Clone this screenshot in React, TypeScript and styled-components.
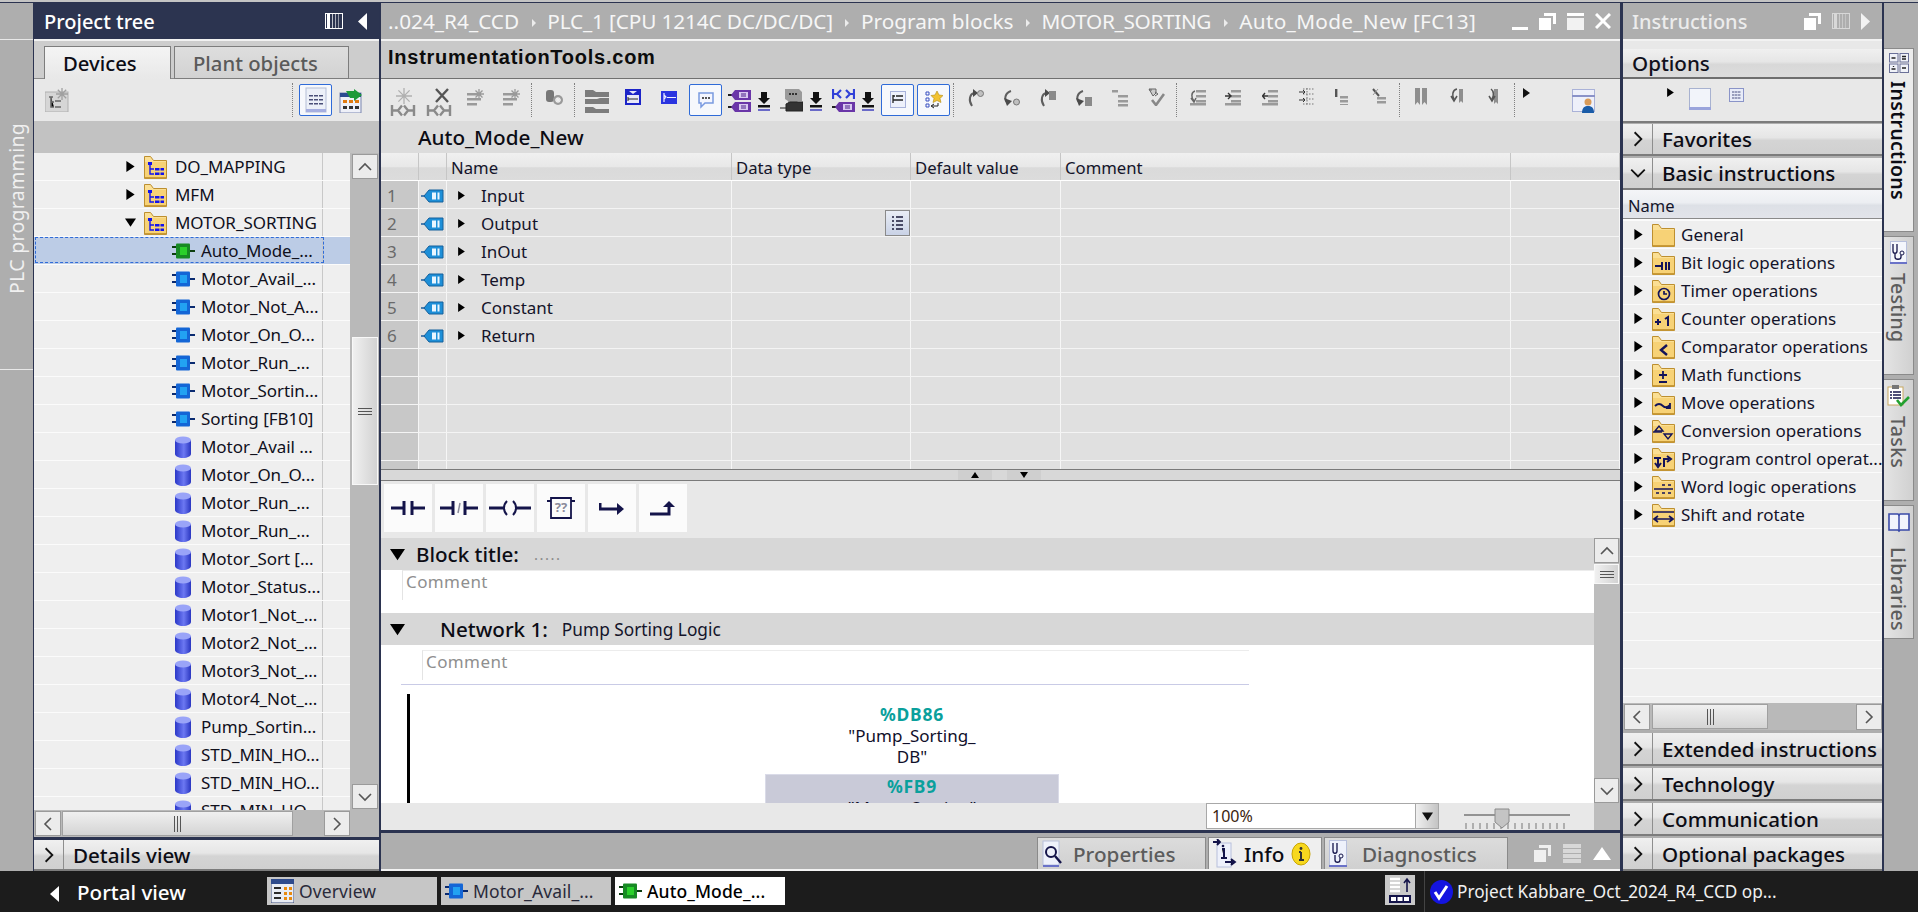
import React from "react";
import styled, { createGlobalStyle } from "styled-components";

const GlobalStyle = createGlobalStyle`
  html, body { margin: 0; padding: 0; background: #1c1c1c; overflow: hidden; }
  * { box-sizing: border-box; }
  #root { font-family: "Noto Sans", "Open Sans", sans-serif; color: #10101c; }
`;

const Screen = styled.div`
  width: 1918px;
  height: 912px;
  display: flex;
  flex-direction: column;
  overflow: hidden;
`;
const TopEdge = styled.div`
  height: 3px;
  flex: none;
  background: #c4c4c4;
  border-bottom: 1px solid #2b3350;
`;
const Workspace = styled.div`
  flex: 1;
  display: flex;
  min-height: 0;
  background: #2b3350;
`;
const SideRail = styled.div`
  width: 33px;
  flex: none;
  background: #aeaeae;
  display: flex;
  flex-direction: column;
`;
const RailHead = styled.div`
  height: 37px;
  flex: none;
  border-bottom: 1px solid #e8e8e8;
`;
const RailLabel = styled.div`
  height: 330px;
  flex: none;
  border-top: 1px solid #e8e8e8;
  writing-mode: vertical-rl;
  transform: rotate(180deg);
  color: #f0f0f0;
  font-size: 19.5px;
  letter-spacing: 0.3px;
  display: flex;
  align-items: center;
  justify-content: flex-start;
  padding-top: 75px;
`;
const Line = styled.div<{ $w?: number }>`
  flex: none;
  width: ${(p) => p.$w ?? 2}px;
`;

const TreePanel = styled.div`
  width: 345px;
  margin-left: 1px;
  flex: none;
  display: flex;
  flex-direction: column;
  background: #aeaeae;
`;
const PanelHead = styled.div<{ $dark?: boolean }>`
  height: 38px;
  flex: none;
  display: flex;
  align-items: center;
  background: ${(p) => (p.$dark ? "#2c3450" : "#aeaeae")};
  border-bottom: 2px solid #f2f2f2;
  color: ${(p) => (p.$dark ? "#ffffff" : "#ececec")};
  font-size: 20px;
  white-space: nowrap;
`;
const HeadTitle = styled.span<{ $left: number }>`
  margin-left: ${(p) => p.$left}px;
  flex: 1;
  font-weight: 500;
`;
const HeadIcons = styled.span<{ $gap: number; $right: number }>`
  display: flex;
  align-items: center;
  gap: ${(p) => p.$gap}px;
  margin-right: ${(p) => p.$right}px;
`;
const TabStrip = styled.div`
  height: 38px;
  flex: none;
  background: #cdcdcd;
  display: flex;
  align-items: flex-end;
  gap: 3px;
  padding-left: 10px;
  border-bottom: 1px solid #8a8a8a;
`;
const TreeTab = styled.div<{ $active?: boolean; $w: number; $pl: number }>`
  width: ${(p) => p.$w}px;
  height: 33px;
  margin-bottom: -1px;
  padding-left: ${(p) => p.$pl}px;
  display: flex;
  align-items: center;
  font-size: 20.3px;
  font-weight: 500;
  color: ${(p) => (p.$active ? "#0c0c14" : "#5a5a5a")};
  border: 1px solid #7d7d7d;
  border-bottom: ${(p) => (p.$active ? "none" : "1px solid #7d7d7d")};
  background: ${(p) =>
    p.$active ? "linear-gradient(#f4f4f4, #e8e8e8)" : "linear-gradient(#dedede, #d2d2d2)"};
`;
const TreeTools = styled.div`
  height: 42px;
  flex: none;
  background: #e8e8e8;
  display: flex;
  align-items: center;
  padding-left: 11px;
`;
const ToolSep = styled.span<{ $ml: number }>`
  display: block;
  flex: none;
  margin-left: ${(p) => p.$ml}px;
  width: 1px;
  height: 34px;
  border-left: 1px dotted #808080;
`;
const SelectedTool = styled.span<{ $w?: number; $ml?: number; $top?: number }>`
  flex: none;
  display: flex;
  align-items: center;
  justify-content: center;
  width: ${(p) => p.$w ?? 33}px;
  height: 32px;
  margin-left: ${(p) => p.$ml ?? 0}px;
  margin-top: ${(p) => p.$top ?? 0}px;
  border: 1px solid #2f6bd8;
  border-radius: 2px;
  background: #f6f8fc;
`;
const TreeToolIcon = styled.span`
  margin-left: 7px;
  line-height: 0;
`;
const GreyBand = styled.div`
  height: 32px;
  flex: none;
  background: #c2c2c2;
`;
const TreeBody = styled.div`
  flex: 1;
  display: flex;
  min-height: 0;
`;
const TreeList = styled.div`
  width: 316px;
  flex: none;
  background: #efefef;
  overflow: hidden;
`;
const TreeRow = styled.div<{ $selected?: boolean }>`
  position: relative;
  height: 28px;
  display: flex;
  align-items: center;
  border-bottom: 1px solid #fbfbfb;
  background: ${(p) => (p.$selected ? "#bccce6" : "transparent")};
  font-size: 17px;
  letter-spacing: -0.05px;
  white-space: nowrap;
  &::before {
    content: "";
    position: absolute;
    left: 288px;
    top: 0;
    bottom: 0;
    width: 1px;
    background: #c8c8c8;
  }
  &::after {
    content: "";
    position: absolute;
    left: 1px;
    top: 0;
    bottom: 1px;
    width: 287px;
    border: ${(p) => (p.$selected ? "1px dashed #2f6bd8" : "none")};
  }
`;
const TreeArrowSlot = styled.span`
  width: 102px;
  flex: none;
  display: flex;
  justify-content: flex-end;
`;
const TreeFolderSlot = styled.span`
  flex: none;
  display: flex;
  width: 39px;
  justify-content: flex-end;
  padding-right: 8px;
`;
const TreeBlockSlot = styled.span<{ $pl?: number }>`
  margin-left: 138px;
  width: 29px;
  padding-left: ${(p) => p.$pl ?? 0}px;
  flex: none;
  display: flex;
  justify-content: flex-start;
`;
const VScroll = styled.div`
  width: 29px;
  flex: none;
  background: #b9b9b9;
  display: flex;
  flex-direction: column;
  align-items: center;
  padding: 1px 0;
`;
const ScrollBtn = styled.div<{ $w: number; $h: number; $ml?: number }>`
  width: ${(p) => p.$w}px;
  height: ${(p) => p.$h}px;
  margin-left: ${(p) => p.$ml ?? 0}px;
  flex: none;
  display: flex;
  align-items: center;
  justify-content: center;
  background: #ececec;
  border: 1px solid #fafafa;
  outline: 1px solid #9a9a9a;
  outline-offset: -1px;
`;
const VThumb = styled.div<{ $top: number; $h: number; $w?: number }>`
  width: ${(p) => p.$w ?? 26}px;
  height: ${(p) => p.$h}px;
  margin-top: ${(p) => p.$top}px;
  flex: none;
  background: linear-gradient(90deg, #f0f0f0, #d2d2d2);
  border: 1px solid #f8f8f8;
  display: flex;
  align-items: center;
  justify-content: center;
`;
const Spacer = styled.div`
  flex: 1;
`;
const GripH = styled.div`
  width: 14px;
  height: 7px;
  border-top: 1px solid #555;
  border-bottom: 1px solid #555;
  position: relative;
  &::after {
    content: "";
    position: absolute;
    left: 0;
    right: 0;
    top: 2px;
    height: 1px;
    background: #555;
  }
`;
const GripV = styled.div`
  width: 7px;
  height: 16px;
  border-left: 1px solid #555;
  border-right: 1px solid #555;
  position: relative;
  &::after {
    content: "";
    position: absolute;
    top: 0;
    bottom: 0;
    left: 2px;
    width: 1px;
    background: #555;
  }
`;
const HScroll = styled.div`
  height: 27px;
  flex: none;
  display: flex;
  align-items: center;
  background: #b9b9b9;
  padding-left: 1px;
`;
const HThumb = styled.div<{ $ml: number; $w: number }>`
  width: ${(p) => p.$w}px;
  margin-left: ${(p) => p.$ml}px;
  height: 25px;
  flex: none;
  display: flex;
  align-items: center;
  justify-content: center;
  background: linear-gradient(#f0f0f0, #d4d4d4);
  border: 1px solid #f8f8f8;
  outline: 1px solid #a0a0a0;
  outline-offset: -1px;
`;
const DarkRule = styled.div`
  height: 3px;
  flex: none;
  background: #2b3350;
`;
const Accordion = styled.div<{ $h: number; $mt?: number }>`
  height: ${(p) => p.$h}px;
  margin-top: ${(p) => p.$mt ?? 0}px;
  flex: none;
  display: flex;
  align-items: center;
  background: linear-gradient(#f0f0f0 0%, #e6e6e6 45%, #d4d4d4 55%, #d0d0d0 100%);
  border-bottom: 2px solid #7c7c7c;
  font-size: 20.6px;
  font-weight: 500;
  color: #0c0c14;
  white-space: nowrap;
`;
const AccordionChevron = styled.span`
  width: 30px;
  align-self: stretch;
  flex: none;
  display: flex;
  align-items: center;
  justify-content: center;
  border-right: 1px solid #8e8e8e;
  margin-right: 9px;
`;

const EditorPanel = styled.div`
  width: 1239px;
  flex: none;
  display: flex;
  flex-direction: column;
  background: #e8e8e8;
`;
const Crumbs = styled.div`
  flex: 1;
  display: flex;
  align-items: center;
  padding-left: 7px;
  gap: 11.5px;
  font-size: 20.8px;
  color: #f6f6f6;
`;
const Crumb = styled.span<{ $ls?: number }>`
  letter-spacing: ${(p) => p.$ls ?? 0}px;
`;
const CrumbArrow = styled.span`
  width: 0;
  height: 0;
  border-left: 4px solid #ececec;
  border-top: 4px solid transparent;
  border-bottom: 4px solid transparent;
  margin: 3px 0 0 1px;
`;
const BrandBar = styled.div`
  height: 38px;
  flex: none;
  background: #c9c9c9;
  border-bottom: 1px solid #707070;
  padding: 0 0 4px 7px;
  display: flex;
  align-items: center;
  font-family: "Liberation Sans", Arial, sans-serif;
  font-weight: 700;
  font-size: 20px;
  letter-spacing: 0.75px;
  color: #0c0c0c;
`;
const ToolBar = styled.div`
  height: 42px;
  flex: none;
  display: flex;
  align-items: flex-start;
  background: #e8e8e8;
`;
const Tool = styled.span<{ $ml: number; $top: number }>`
  display: block;
  flex: none;
  margin-left: ${(p) => p.$ml}px;
  margin-top: ${(p) => p.$top}px;
  line-height: 0;
`;
const BlockTitle = styled.div`
  height: 32px;
  flex: none;
  display: flex;
  align-items: center;
  padding-left: 37px;
  background: #dcdcdc;
  font-size: 20.7px;
  font-weight: 500;
  color: #0c0c14;
`;
const DeclTable = styled.div`
  height: 316px;
  flex: none;
  overflow: hidden;
  background: #e0e0e0;
`;
const DeclGrid = styled.div<{ $head?: boolean }>`
  display: grid;
  grid-template-columns: 38px 28px 285px 179px 150px 450px 1fr;
  height: 28px;
  background: ${(p) => (p.$head ? "linear-gradient(#f0f0f0 0%, #e8e8e8 50%, #dadada 55%, #dcdcdc 100%)" : "#e0e0e0")};
  border-bottom: 1px solid ${(p) => (p.$head ? "#ffffff" : "#f4f4f4")};
  font-size: ${(p) => (p.$head ? 16.7 : 17)}px;
  color: #14142a;
`;
const DeclCell = styled.div<{ $num?: boolean; $pad?: number }>`
  display: flex;
  align-items: center;
  border-right: 1px solid #f6f6f6;
  padding-left: ${(p) => p.$pad ?? 0}px;
  padding-top: 2px;
  background: ${(p) => (p.$num ? "#c8c8c8" : "transparent")};
  color: ${(p) => (p.$num ? "#6a6a6a" : "inherit")};
  position: relative;
`;
const HeadCell = styled(DeclCell)`
  border-right: 1px solid #c6c6c6;
  padding-left: ${(p) => p.$pad ?? 4}px;
`;
const NameText = styled.span`
  margin-left: 15px;
`;
const MiniList = styled.span`
  position: absolute;
  right: 0;
  top: 1px;
  width: 25px;
  height: 26px;
  border: 1px solid #8a8a8a;
  background: linear-gradient(#e9edf5, #c9d2e6);
  display: flex;
  align-items: center;
  justify-content: center;
`;
const Splitter = styled.div`
  height: 12px;
  flex: none;
  background: #d8d8d8;
  border-top: 1px solid #7a7a7a;
  border-bottom: 1px solid #7a7a7a;
  display: flex;
  gap: 15px;
  padding-left: 577px;
`;
const SplitBtn = styled.div`
  width: 34px;
  height: 10px;
  background: #cfcfcf;
  display: flex;
  align-items: center;
  justify-content: center;
`;
const Palette = styled.div`
  height: 57px;
  flex: none;
  display: flex;
  gap: 3px;
  padding: 3px 0 0 3px;
  background: #e8e8e8;
`;
const PaletteBtn = styled.div`
  width: 48px;
  height: 48px;
  background: #fbfbfb;
  display: flex;
  align-items: center;
  justify-content: center;
`;
const CanvasRow = styled.div`
  flex: 1;
  display: flex;
  min-height: 0;
`;
const Canvas = styled.div`
  width: 1213px;
  flex: none;
  background: #ffffff;
  overflow: hidden;
`;
const NetHead = styled.div<{ $pad: number }>`
  height: 32px;
  display: flex;
  align-items: center;
  background: #d7d7d7;
  padding-left: 9px;
  font-size: 20.6px;
  font-weight: 500;
  color: #0c0c14;
  & > b {
    font-weight: 500;
    margin-left: ${(p) => p.$pad}px;
  }
`;
const NetTitle = styled.span<{ $ml: number }>`
  margin-left: ${(p) => p.$ml}px;
  font-size: 17.3px;
  font-weight: 400;
  color: #14142a;
`;
const TitleDots = styled.span`
  margin-left: 15px;
  font-size: 15px;
  font-weight: 400;
  letter-spacing: 1.5px;
  color: #8a8a8a;
`;
const CommentBox = styled.div<{ $ml: number; $h: number; $w: number }>`
  margin-left: ${(p) => p.$ml}px;
  width: ${(p) => p.$w}px;
  height: ${(p) => p.$h}px;
  border-left: 1px solid #e4e4e4;
  border-top: 1px solid #ececec;
  padding: 0 0 0 3px;
  font-size: 17px;
  line-height: 22px;
  color: #8f8f8f;
  letter-spacing: 0.4px;
`;
const CommentWrap = styled.div<{ $pt: number; $h: number }>`
  height: ${(p) => p.$h}px;
  padding-top: ${(p) => p.$pt}px;
`;
const NetRule = styled.div`
  margin: 4px 0 0 20px;
  width: 848px;
  height: 1px;
  background: #c9cbe6;
`;
const Rung = styled.div`
  display: flex;
  padding: 9px 0 0 26px;
  height: 120px;
`;
const RungBar = styled.div`
  width: 3px;
  height: 111px;
  flex: none;
  background: #000;
`;
const FbColumn = styled.div`
  margin-left: 355px;
  width: 294px;
  flex: none;
  text-align: center;
  font-size: 17px;
  line-height: 21px;
  color: #10102a;
  padding-top: 9px;
`;
const Address = styled.div`
  color: #0aa09c;
  font-weight: 700;
  font-size: 17.5px;
  letter-spacing: 0.7px;
  line-height: 22px;
`;
const FbBox = styled.div`
  margin-top: 7px;
  height: 40px;
  background: #c9cad8;
  border: 1px solid #dadbe8;
`;
const CanvasScroll = styled.div`
  width: 26px;
  flex: none;
  background: #bdbdbd;
  display: flex;
  flex-direction: column;
`;
const StatusRow = styled.div`
  height: 27px;
  flex: none;
  display: flex;
  align-items: stretch;
  padding-left: 825px;
  background: #e8e8e8;
`;
const Combo = styled.div`
  width: 233px;
  height: 26px;
  flex: none;
  display: flex;
  background: #fff;
  border: 1px solid #a8a8a8;
  font-size: 16px;
  color: #3a2410;
`;
const ComboText = styled.span`
  flex: 1;
  padding-left: 5px;
  line-height: 24px;
`;
const ComboBtn = styled.span`
  width: 23px;
  display: flex;
  align-items: center;
  justify-content: center;
  background: linear-gradient(90deg, #f0f0f0, #c4c4c4);
  border-left: 1px solid #a8a8a8;
`;
const ZoomSlider = styled.span`
  margin-left: 25px;
  line-height: 0;
  flex: none;
`;
const StatusEnd = styled.div`
  margin-left: auto;
  width: 26px;
  background: #bdbdbd;
`;
const InspectorBar = styled.div`
  height: 38px;
  flex: none;
  display: flex;
  align-items: flex-end;
  background: #aeaeae;
  border-bottom: 2px solid #f2f2f2;
  padding: 0 0 0 656px;
`;
const InspectorTab = styled.div<{ $w: number; $active?: boolean; $ml: number; $gap: number }>`
  width: ${(p) => p.$w}px;
  margin-left: ${(p) => p.$ml}px;
  height: 32px;
  flex: none;
  display: flex;
  align-items: center;
  gap: ${(p) => p.$gap}px;
  padding-left: 4px;
  font-size: 20.7px;
  font-weight: 500;
  color: ${(p) => (p.$active ? "#0c0c14" : "#5c5c5c")};
  border: 1px solid #8a8a8a;
  border-bottom: none;
  background: ${(p) => (p.$active ? "#efefef" : "linear-gradient(#dcdcdc, #d0d0d0)")};
`;
const InspectorIcons = styled.div`
  margin-left: 26px;
  height: 32px;
  display: flex;
  align-items: center;
  gap: 12px;
`;

const InstrPanel = styled.div`
  width: 259px;
  flex: none;
  display: flex;
  flex-direction: column;
  background: #aeaeae;
`;
const OptionsGap = styled.div`
  background: #e8e8e8;
  display: flex;
  flex-direction: column;
  flex: none;
`;
const OptionsBar = styled.div`
  height: 30px;
  margin-top: 8px;
  flex: none;
  display: flex;
  align-items: center;
  padding-left: 9px;
  font-size: 20.6px;
  font-weight: 500;
  background: linear-gradient(#f0f0f0 0%, #e6e6e6 45%, #d8d8d8 55%, #dcdcdc 100%);
  border-bottom: 2px solid #6e6e6e;
`;
const OptionsTools = styled.div`
  height: 44px;
  flex: none;
  display: flex;
  align-items: flex-start;
  background: #e8e8e8;
  border-bottom: 2px solid #7c7c7c;
`;
const InstrHeader = styled.div`
  height: 29px;
  flex: none;
  display: flex;
  align-items: center;
  padding: 2px 0 0 5px;
  font-size: 16.5px;
  color: #14142a;
  background: linear-gradient(#f4f5f8 0%, #eceef2 45%, #dde0e6 55%, #e2e4ea 100%);
  border-bottom: 1px solid #8a8a8a;
`;
const InstrList = styled.div`
  height: 484px;
  flex: none;
  overflow: hidden;
  background: #efefef;
  border-top: 2px solid #fbfbfb;
`;
const InstrRow = styled.div`
  height: 28px;
  display: flex;
  align-items: center;
  border-bottom: 1px solid #fbfbfb;
  padding-left: 10px;
  font-size: 17px;
  color: #14142a;
  white-space: nowrap;
`;
const InstrIconSlot = styled.span`
  margin: 0 6px 0 8px;
  line-height: 0;
`;
const RightRail = styled.div`
  flex: 1;
  background: #aeaeae;
  display: flex;
  flex-direction: column;
  padding-top: 45px;
  gap: 4px;
  border-left: 2px solid #2b3350;
`;
const RailTab = styled.div<{ $h: number; $active?: boolean; $gap?: number; $pt?: number }>`
  width: 30px;
  height: ${(p) => p.$h}px;
  flex: none;
  display: flex;
  flex-direction: column;
  align-items: center;
  padding-top: ${(p) => p.$pt ?? 4}px;
  gap: ${(p) => p.$gap ?? 8}px;
  background: ${(p) => (p.$active ? "#ececec" : "linear-gradient(90deg,#e4e4e4,#d0d0d0)")};
  border: 1px solid #8a8a8a;
  border-left: none;
`;
const RailTabText = styled.span<{ $active?: boolean }>`
  writing-mode: vertical-rl;
  font-size: 19.5px;
  font-weight: ${(p) => (p.$active ? 600 : 500)};
  color: ${(p) => (p.$active ? "#0c0c14" : "#5c5c5c")};
  letter-spacing: 0.3px;
`;

const TaskBar = styled.div`
  height: 41px;
  flex: none;
  display: flex;
  align-items: flex-start;
  background: #1c1c1c;
  color: #fff;
`;
const PortalArrow = styled.span`
  margin: 15px 0 0 50px;
  width: 0;
  height: 0;
  border-right: 9px solid #fff;
  border-top: 8px solid transparent;
  border-bottom: 8px solid transparent;
`;
const PortalText = styled.span`
  margin: 7px 0 0 18px;
  width: 190px;
  font-size: 20.6px;
  font-weight: 500;
`;
const EditorTask = styled.div<{ $active?: boolean }>`
  width: 170px;
  height: 28px;
  margin: 6px 4px 0 0;
  flex: none;
  display: flex;
  align-items: center;
  gap: 5px;
  padding-left: 4px;
  font-size: 17.5px;
  letter-spacing: 0.1px;
  font-weight: ${(p) => (p.$active ? 500 : 400)};
  color: ${(p) => (p.$active ? "#000" : "#2a2a3a")};
  background: ${(p) => (p.$active ? "#fff" : "#c6c6c6")};
`;
const TaskTool = styled.div`
  width: 30px;
  height: 30px;
  margin: 4px 0 0 596px;
  flex: none;
  background: #c9c9c9;
  display: flex;
  align-items: center;
  justify-content: center;
`;
const TaskStatus = styled.div`
  margin-left: 9px;
  height: 41px;
  flex: 1;
  border-left: 1px solid #444;
  display: flex;
  align-items: center;
  gap: 4px;
  padding-left: 5px;
  font-size: 17.2px;
  color: #f0f0f0;
`;

/* ---------- drawings ---------- */

const Tri = ({ dir, size = 8, color = "#000" }: { dir: "r" | "d" | "l" | "u"; size?: number; color?: string }) => {
  const pts = { r: "1,0 7,4 1,8", d: "0,1 8,1 4,7", l: "7,0 1,4 7,8", u: "0,7 8,7 4,1" }[dir];
  return (
    <svg width={size} height={size} viewBox="0 0 8 8" style={{ flex: "none" }}>
      <polygon points={pts} fill={color} />
    </svg>
  );
};

const Chev = ({ dir, size = 16, color = "#555" }: { dir: "r" | "d" | "l" | "u"; size?: number; color?: string }) => {
  const d = { r: "M5 2l6 6-6 6", l: "M11 2L5 8l6 6", d: "M2 5l6 6 6-6", u: "M2 11l6-6 6 6" }[dir];
  return (
    <svg width={size} height={size} viewBox="0 0 16 16" fill="none" stroke={color} strokeWidth="1.6">
      <path d={d} />
    </svg>
  );
};

const Pillars = ({ color = "#fff" }: { color?: string }) => (
  <svg width="18" height="16" viewBox="0 0 18 16">
    <rect x="0.5" y="0.5" width="17" height="15" fill="none" stroke={color} />
    <rect x="2" y="1" width="3" height="14" fill={color} />
    <rect x="7" y="1" width="1" height="14" fill={color} opacity=".7" />
    <rect x="10" y="1" width="1" height="14" fill={color} opacity=".6" />
    <rect x="13" y="1" width="1" height="14" fill={color} opacity=".5" />
  </svg>
);

const RestoreIcon = ({ color = "#fff", w = 17 }: { color?: string; w?: number }) => (
  <svg width={w} height="17" viewBox="0 0 17 17">
    <path d="M5 0h12v11h-3V3H5z" fill={color} />
    <rect x="0" y="5" width="12" height="12" fill={color} />
  </svg>
);

const FolderIcon = ({ glyph }: { glyph?: string }) => {
  const stroke = "#13135a";
  return (
    <svg width="23" height="24" viewBox="0 0 23 24" style={{ flex: "none" }}>
      <path d="M.5 1.5h6l3 4h13v18H.5z" fill="#fbdf94" stroke="#bd8f2f" />
      <path d="M1 7h21v16H1z" fill="#f7d276" />
      <rect x="1" y="22" width="21" height="1.5" fill="#c99a37" />
      {glyph === "tree" && (
        <g>
          <rect x="4" y="7" width="4" height="3" fill="#1212ee" />
          <path d="M6 10v9h4M6 14h4" stroke="#1212ee" strokeWidth="1.4" fill="none" />
          <rect x="11" y="13" width="4.500" height="2.500" fill="#1212ee" />
          <rect x="11" y="17.5" width="4.500" height="2.500" fill="#1212ee" />
          <rect x="16.500" y="13" width="3.500" height="2.500" fill="#1212ee" />
          <rect x="16.500" y="17.5" width="3.500" height="2.500" fill="#1212ee" />
        </g>
      )}
      {glyph === "bit" && <path d="M3 15h7M10 11v8M14 11v8M17 11v8" stroke={stroke} strokeWidth="2" fill="none" />}
      {glyph === "timer" && (
        <g fill="none" stroke={stroke} strokeWidth="1.7">
          <circle cx="12" cy="15" r="5.5" />
          <path d="M12 12v3h3" />
        </g>
      )}
      {glyph === "count" && <path d="M3 15h6M6 12v6M13 12l3-2v9" stroke={stroke} strokeWidth="2" fill="none" />}
      {glyph === "cmp" && <path d="M15 10l-6 5 6 5" stroke={stroke} strokeWidth="2.4" fill="none" />}
      {glyph === "math" && <path d="M7 12h8M11 8v8M7 19h8" stroke={stroke} strokeWidth="1.8" fill="none" />}
      {glyph === "move" && <path d="M3 15c3-3 6-2 8 0s4 2 7-1M18 12v5h-4" stroke={stroke} strokeWidth="1.8" fill="none" />}
      {glyph === "conv" && (
        <g fill="none" stroke={stroke} strokeWidth="1.4">
          <path d="M3 12l4-5 4 5z" />
          <path d="M12 15h8l-4 5z" />
          <path d="M1 13h9" />
        </g>
      )}
      {glyph === "ctrl" && <path d="M2 11h7M6 11v8M3 16l3 4 3-4M12 20v-8h5M15 9l4 3-4 3" stroke={stroke} strokeWidth="2" fill="none" />}
      {glyph === "word" && <path d="M2 14h19M10 10h3M10 18h3M16 10h3M16 18h3M4 18h3" stroke={stroke} strokeWidth="1.6" fill="none" />}
      {glyph === "shift" && <path d="M1 9h21M3 16h17M6 13l-4 3 4 3M17 13l4 3-4 3" stroke={stroke} strokeWidth="1.7" fill="none" />}
    </svg>
  );
};

const BlockIcon = ({ green }: { green?: boolean }) => {
  const outer = green ? "#178a24" : "#1466d6";
  const inner = green ? "#2bd02b" : "#22a2f2";
  const pin = green ? "#0c3d10" : "#0a2a70";
  return (
    <svg width="23" height="16" viewBox="0 0 23 16" style={{ flex: "none" }}>
      <rect x="0" y="3" width="6" height="2" fill={pin} />
      <rect x="0" y="10" width="6" height="2" fill={pin} />
      <rect x="17" y="7" width="6" height="2" fill={pin} />
      <rect x="4" y="0.5" width="14" height="15" rx="1" fill={outer} />
      <rect x="8" y="4" width="7" height="8" fill={inner} />
    </svg>
  );
};

const DbIcon = () => (
  <svg width="16" height="22" viewBox="0 0 16 22" style={{ flex: "none" }}>
    <defs>
      <linearGradient id="dbg" x1="0" x2="1" y1="0" y2="0">
        <stop offset="0" stopColor="#2b38c8" />
        <stop offset="0.55" stopColor="#6c78f2" />
        <stop offset="1" stopColor="#2a36c0" />
      </linearGradient>
    </defs>
    <path d="M0 4v14c0 2.2 3.6 4 8 4s8-1.800 8-4V4z" fill="url(#dbg)" />
    <ellipse cx="8" cy="4" rx="8" ry="3.600" fill="#9aa4f8" />
  </svg>
);

const TagIcon = () => (
  <svg width="23" height="14" viewBox="0 0 23 14" style={{ flex: "none" }}>
    <path d="M0 7h6" stroke="#1a5c9c" strokeWidth="1.5" />
    <path d="M3 7l5-6h14v12H8z" fill="#1d8fd8" stroke="#14609c" />
    <rect x="11" y="3.500" width="4" height="7" fill="#e9f6ff" />
    <rect x="16.500" y="3.500" width="2" height="7" fill="#e9f6ff" />
  </svg>
);

const TreeListIcon = ({ w = 22 }: { w?: number }) => (
  <svg width={w} height="26" viewBox="0 0 22 26">
    <rect x="1" y="1" width="20" height="24" fill="#ecf0f8" stroke="#b4bdd6" />
    <rect x="1" y="22" width="20" height="3" fill="#a5aee0" />
    <g fill="#4a4f78">
      <rect x="4" y="8" width="4" height="1.500" />
      <rect x="9" y="8" width="4" height="1.500" />
      <rect x="14" y="8" width="4" height="1.500" />
      <rect x="4" y="12" width="4" height="1.500" />
      <rect x="9" y="12" width="4" height="1.500" />
      <rect x="14" y="12" width="4" height="1.500" />
      <rect x="4" y="16" width="4" height="1.500" />
      <rect x="9" y="16" width="4" height="1.500" />
      <rect x="14" y="16" width="4" height="1.500" />
    </g>
  </svg>
);

const OverviewIcon = () => (
  <svg width="23" height="24" viewBox="0 0 23 24" style={{ flex: "none" }}>
    <rect width="23" height="24" fill="#e8ecf4" stroke="#3a4a7a" />
    <rect x="0" y="0" width="23" height="5" fill="#2d4a8c" />
    <g fill="#e88a10">
      <rect x="13" y="8" width="3" height="3" />
      <rect x="13" y="13" width="3" height="3" />
      <rect x="13" y="18" width="3" height="3" />
      <rect x="18" y="8" width="3" height="3" />
      <rect x="18" y="13" width="3" height="3" />
      <rect x="18" y="18" width="3" height="3" />
    </g>
    <g fill="#2a2a2a">
      <rect x="3" y="8" width="7" height="2" />
      <rect x="3" y="13" width="7" height="2" />
      <rect x="3" y="18" width="7" height="2" />
    </g>
  </svg>
);

const Ldr = ({ w, h, children }: { w: number; h: number; children: React.ReactNode }) => (
  <svg width={w} height={h} viewBox={`0 0 ${w} ${h}`} fill="none">
    {children}
  </svg>
);

const KH = ({ y = 18, color = "#8a8a8a" }: { y?: number; color?: string }) => (
  <path
    d={`M2 ${y}v11M2 ${y + 5.5}h6M8 ${y + 5.5}l4-5M8 ${y + 5.5}l4 5M24 ${y}v11M24 ${y + 5.5}h-6M18 ${y + 5.5}l-4-5M18 ${y + 5.5}l-4 5`}
    stroke={color}
    strokeWidth="2.4"
  />
);

const Star = ({ x, y, r = 7, color = "#9a9a9a" }: { x: number; y: number; r?: number; color?: string }) => (
  <path
    d={`M${x - r} ${y}h${2 * r}M${x} ${y - r}v${2 * r}M${x - r * 0.7} ${y - r * 0.7}l${1.4 * r} ${1.4 * r}M${x - r * 0.7} ${y + r * 0.7}l${1.4 * r} ${-1.4 * r}`}
    stroke={color}
    strokeWidth="1.300"
  />
);

const GreyLines = ({ x, y, w = 14 }: { x: number; y: number; w?: number }) => (
  <g fill="#9a9a9a">
    <rect x={x} y={y} width={w} height="2.500" />
    <rect x={x} y={y + 5} width={w} height="2.500" />
    <rect x={x} y={y + 10} width={w - 4} height="2.500" />
  </g>
);

const Download = () => (
  <Ldr w={12} h={20}>
    <path d="M3 0h6v6h3l-6 6-6-6h3z" fill="#111" />
    <rect y="13" width="12" height="2.500" fill="#111" />
    <rect y="17" width="12" height="2" fill="#6a6ac8" />
  </Ldr>
);

const PurpleTag = ({ y = 0 }: { y?: number }) => (
  <g transform={`translate(0 ${y})`}>
    <path d="M0 6h5" stroke="#222" strokeWidth="2" />
    <path d="M3 6l4-5h16v10H7z" fill="#6a36a8" />
    <rect x="11" y="3" width="9" height="6" fill="#d8c8f0" />
    <rect x="13" y="4.500" width="5" height="1" fill="#4a2088" />
    <rect x="13" y="6.500" width="5" height="1" fill="#4a2088" />
  </g>
);

// curved jump arrow, head up-right or (back) down-left, with a mark beside it
const ArrowGrey = ({ back, dot }: { back?: boolean; dot?: boolean }) => (
  <Ldr w={16} h={18}>
    <path
      d={back ? "M7 2C1 4 0 10 3 13" : "M4 17C0 11 2 5 6 4"}
      stroke="#5e5e5e"
      strokeWidth="2"
    />
    <path d={back ? "M0 9l3 8 5-5z" : "M5 0l5 4-5 4z"} fill="#4a4a4a" />
    {dot ? (
      <circle cx="12.500" cy={back ? 13 : 4.500} r="3" fill="#c0c0c0" stroke="#777" />
    ) : (
      <rect x="9" y={back ? 8 : 2} width="7" height="9" fill="#8a8a8a" />
    )}
  </Ldr>
);

const LinesArrow = ({ dir }: { dir: "l" | "r" | "b" }) => (
  <Ldr w={16} h={17}>
    <g fill="#9a9a9a">
      <rect x="6" y="1" width="10" height="2.500" />
      <rect x="6" y="6" width="10" height="2.500" />
      <rect x="6" y="11" width="10" height="2.500" />
      <rect x="0" y="14" width="16" height="2.500" />
    </g>
    {dir === "r" && <path d="M0 7h5M3 4l3 3-3 3" stroke="#333" strokeWidth="1.400" />}
    {dir === "l" && <path d="M6 7H1M3 4L0.500 7 3 10" stroke="#333" strokeWidth="1.400" />}
    {dir === "b" && <path d="M5 2C1 3 1 9 4 12M1 9l3 4 2-4" stroke="#666" strokeWidth="1.500" />}
  </Ldr>
);

type ToolDef = { at: number; y: number; w: number; node?: React.ReactNode; sep?: boolean; sel?: boolean };

const editorTools: ToolDef[] = [
  { at: 390, y: 8, w: 27, node: <Ldr w={27} h={30}><KH y={18} /><Star x={14} y={9} r={8} color="#b0b0b0" /></Ldr> },
  { at: 426, y: 8, w: 27, node: <Ldr w={27} h={30}><KH y={18} /><path d="M10 2l12 13M22 2L10 15" stroke="#555" strokeWidth="2.400" /></Ldr> },
  { at: 467, y: 10, w: 17, node: <Ldr w={17} h={17}><GreyLines x={0} y={4} /><Star x={12} y={5} r={5} /></Ldr> },
  { at: 503, y: 10, w: 17, node: <Ldr w={17} h={17}><GreyLines x={0} y={4} /><Star x={12} y={5} r={5} /></Ldr> },
  { at: 531, y: 4, w: 1, sep: true },
  { at: 546, y: 10, w: 17, node: <Ldr w={17} h={18}><rect x="0" y="1" width="8" height="12" rx="3" fill="#777" /><circle cx="12" cy="11" r="5" fill="#999" /><Star x={12} y={11} r={3} color="#eee" /></Ldr> },
  { at: 574, y: 4, w: 1, sep: true },
  { at: 585, y: 11, w: 24, node: <Ldr w={24} h={23}><path d="M0 0h8l3 2h13v5H0zM0 9h12l3-1h9v6H0zM0 17h8l3 2h13v4H0z" fill="#7c7c7c" /></Ldr> },
  { at: 625, y: 10, w: 16, node: <Ldr w={16} h={16}><rect width="16" height="16" fill="#1c24c8" /><rect x="2" y="6" width="12" height="8" fill="#e8e8f8" /><path d="M4 2h8L8 5z" fill="#e8e8f8" /><path d="M3 10h10M3 8v4" stroke="#222" /></Ldr> },
  { at: 661, y: 12, w: 16, node: <Ldr w={16} h={13}><rect width="16" height="13" fill="#2a34e0" /><path d="M3 2v9M6 6.500h9M3 4l2 2-2 2" stroke="#eef" strokeWidth="1.200" /></Ldr> },
  { at: 689, y: 5, w: 33, sel: true, node: <Ldr w={18} h={18}><path d="M2 2h14v10H8l-4 4v-4H2z" fill="#f4f6ff" stroke="#7a9ae0" strokeWidth="1.500" /><path d="M5 7h2M8 7h2M11 7h2" stroke="#222" strokeWidth="1.500" /></Ldr> },
  { at: 728, y: 10, w: 23, node: <Ldr w={23} h={24}><PurpleTag y={0} /><PurpleTag y={12} /></Ldr> },
  { at: 758, y: 13, w: 12, node: <Download /> },
  { at: 780, y: 10, w: 23, node: <Ldr w={23} h={24}><path d="M5 0h14l3 3v9h-4l-4 4H8V12L5 10z" fill="#9a9a9a" /><path d="M9 5h2M12 5h2M15 5h2" stroke="#111" strokeWidth="1.500" /><path d="M0 19h6M6 15l4-2h13v9H6z" fill="#333" stroke="#222" /></Ldr> },
  { at: 810, y: 13, w: 12, node: <Download /> },
  { at: 832, y: 10, w: 23, node: <Ldr w={23} h={24}><path d="M1 0v10M1 5h4M5 5l4-4M5 5l4 4M22 0v10M22 5h-4M18 5l-4-4M18 5l-4 4" stroke="#3040d8" strokeWidth="2.200" /><PurpleTag y={12} /></Ldr> },
  { at: 862, y: 13, w: 12, node: <Download /> },
  { at: 881, y: 5, w: 33, sel: true, node: <Ldr w={16} h={18}><rect x="0.500" y="0.500" width="15" height="16" fill="#eef1fb" stroke="#a8b2da" /><path d="M3 4v8M3 5h2M3 9h10M6 5h7" stroke="#222" strokeWidth="1.300" /></Ldr> },
  { at: 917, y: 5, w: 33, sel: true, node: <Ldr w={18} h={20}><path d="M1 2h3v3H1zM1 8h3v3H1zM1 14h3v3H1z" fill="none" stroke="#3a50c0" /><path d="M12 1l2 4 4 .5-3 3 1 4-4-2-4 2 1-4-3-3 4-.5z" fill="#f2c230" stroke="#b08a10" strokeWidth=".6" /><path d="M13 13v3H7M9 14l-3 2 3 2" stroke="#222" /></Ldr> },
  { at: 953, y: 4, w: 1, sep: true },
  { at: 968, y: 10, w: 16, node: <ArrowGrey dot /> },
  { at: 1004, y: 10, w: 16, node: <ArrowGrey back dot /> },
  { at: 1040, y: 10, w: 16, node: <ArrowGrey /> },
  { at: 1076, y: 10, w: 16, node: <ArrowGrey back /> },
  { at: 1112, y: 11, w: 16, node: <Ldr w={16} h={17}><rect x="0" y="0" width="6" height="2.500" fill="#9a9a9a" /><g fill="#9a9a9a"><rect x="6" y="5" width="10" height="2.500" /><rect x="6" y="10" width="10" height="2.500" /><rect x="6" y="14" width="10" height="2.500" /></g></Ldr> },
  { at: 1148, y: 9, w: 17, node: <Ldr w={17} h={18}><path d="M1 1h7v4l-3 3zM1 2h3" stroke="#666" fill="#ccc" /><path d="M7 4l3 2-3 2" stroke="#666" /><path d="M4 12l4 5 8-11" stroke="#888" strokeWidth="2.600" /></Ldr> },
  { at: 1176, y: 4, w: 1, sep: true },
  { at: 1190, y: 10, w: 17, node: <LinesArrow dir="b" /> },
  { at: 1226, y: 10, w: 16, node: <LinesArrow dir="r" /> },
  { at: 1263, y: 10, w: 16, node: <LinesArrow dir="l" /> },
  { at: 1300, y: 9, w: 16, node: <Ldr w={16} h={18}><g stroke="#777" strokeDasharray="1.500 1.500"><path d="M4 1h12M4 6h12M4 11h12M4 16h12M8 0v18" /></g><path d="M0 4h6M4 2l2 2-2 2M0 12h6M4 10l2 2-2 2" stroke="#333" /></Ldr> },
  { at: 1336, y: 9, w: 13, node: <Ldr w={13} h={17}><rect x="0" y="1" width="2.400" height="8" fill="#555" /><g fill="#9a9a9a"><rect x="5" y="8" width="8" height="2.500" /><rect x="5" y="12" width="8" height="2.500" /><rect x="5" y="16" width="8" height="1" /></g></Ldr> },
  { at: 1373, y: 9, w: 14, node: <Ldr w={14} h={17}><path d="M1 1l6 7" stroke="#555" strokeWidth="2" /><path d="M6 1L1 7" stroke="#999" /><g fill="#9a9a9a"><rect x="5" y="9" width="9" height="2.500" /><rect x="5" y="13" width="9" height="2.500" /></g></Ldr> },
  { at: 1400, y: 4, w: 1, sep: true },
  { at: 1416, y: 9, w: 12, node: <Ldr w={12} h={17}><path d="M0 0h5v17l-2.500-3L0 17zM7 0h5v17l-2.500-3L7 17z" fill="#8e8e8e" /></Ldr> },
  { at: 1450, y: 9, w: 15, node: <Ldr w={15} h={17}><path d="M8 1C3 2 3 8 5 11M2 8l3 5 3-5" stroke="#555" strokeWidth="1.500" /><path d="M10 1h4v14l-2-2-2 2z" fill="#8e8e8e" /></Ldr> },
  { at: 1487, y: 9, w: 13, node: <Ldr w={13} h={17}><path d="M0 0h4v15l-2-2-2 2z" fill="#8e8e8e" transform="translate(8 1)" /><path d="M5 1C8 3 8 8 6 11M9 8l-3 5-3-5" stroke="#555" strokeWidth="1.500" /></Ldr> },
  { at: 1515, y: 4, w: 1, sep: true },
  { at: 1524, y: 9, w: 7, node: <Ldr w={7} h={10}><polygon points="0,0 7,5 0,10" fill="#111" /></Ldr> },
  { at: 1573, y: 10, w: 23, node: <Ldr w={23} h={25}><rect x=".5" y=".5" width="22" height="22" fill="#eef0fa" stroke="#aab2d8" /><rect x="0" y="6" width="23" height="2" fill="#8a92c8" /><circle cx="16" cy="13" r="3.500" fill="#d89a58" /><path d="M10 24c0-6 3-7 6-7s6 1 6 7z" fill="#1a5ca8" /></Ldr> },
];

const renderTools = (tools: ToolDef[], start: number) => {
  let cursor = start;
  return tools.map((t, i) => {
    const ml = t.at - cursor;
    cursor = t.at + t.w;
    if (t.sep) return <Tool key={i} $ml={ml} $top={t.y}><ToolSep $ml={0} /></Tool>;
    if (t.sel) return <SelectedTool key={i} $ml={ml} $top={t.y}>{t.node}</SelectedTool>;
    return <Tool key={i} $ml={ml} $top={t.y}>{t.node}</Tool>;
  });
};

const treeFolders = [
  { name: "DO_MAPPING", open: false },
  { name: "MFM", open: false },
  { name: "MOTOR_SORTING", open: true },
];
const treeBlocks = ["Motor_Avail_...", "Motor_Not_A...", "Motor_On_O...", "Motor_Run_...", "Motor_Sortin...", "Sorting [FB10]"];
const treeDbs = [
  "Motor_Avail ...", "Motor_On_O...", "Motor_Run_...", "Motor_Run_...", "Motor_Sort [...", "Motor_Status...",
  "Motor1_Not_...", "Motor2_Not_...", "Motor3_Not_...", "Motor4_Not_...", "Pump_Sortin...",
  "STD_MIN_HO...", "STD_MIN_HO...", "STD_MIN_HO...",
];
const sections = ["Input", "Output", "InOut", "Temp", "Constant", "Return"];
const instructions = [
  { name: "General", glyph: "" },
  { name: "Bit logic operations", glyph: "bit" },
  { name: "Timer operations", glyph: "timer" },
  { name: "Counter operations", glyph: "count" },
  { name: "Comparator operations", glyph: "cmp" },
  { name: "Math functions", glyph: "math" },
  { name: "Move operations", glyph: "move" },
  { name: "Conversion operations", glyph: "conv" },
  { name: "Program control operat...", glyph: "ctrl" },
  { name: "Word logic operations", glyph: "word" },
  { name: "Shift and rotate", glyph: "shift" },
  { name: "", glyph: "none" },
  { name: "", glyph: "none" },
  { name: "", glyph: "none" },
  { name: "", glyph: "none" },
  { name: "", glyph: "none" },
  { name: "", glyph: "none" },
];

const navy = "#14144a";
const paletteIcons = [
  <Ldr w={34} h={16} key="no"><path d="M0 8h13M13 1v14M21 1v14M21 8h13" stroke={navy} strokeWidth="3" /></Ldr>,
  <Ldr w={38} h={16} key="nc"><path d="M0 8h13M13 1v14M25 1v14M25 8h13" stroke={navy} strokeWidth="3" /><path d="M20 3l-2 10" stroke="#8a8a9a" strokeWidth="1.500" /></Ldr>,
  <Ldr w={42} h={16} key="coil"><path d="M0 8h15M27 8h15" stroke={navy} strokeWidth="3" /><path d="M18 1c-4 4-4 10 0 14M24 1c4 4 4 10 0 14" stroke={navy} strokeWidth="2" /></Ldr>,
  <Ldr w={28} h={22} key="box"><path d="M4 1h20v20H4zM0 4h4M24 4h4" stroke={navy} strokeWidth="1.800" /><text x="14" y="15" textAnchor="middle" fontSize="13" fontWeight="700" fill="#8a8a9a" fontFamily="Noto Sans">??</text></Ldr>,
  <Ldr w={26} h={14} key="open"><path d="M1 2v6h18" stroke={navy} strokeWidth="3" /><path d="M18 2l7 6-7 6z" fill={navy} /></Ldr>,
  <Ldr w={26} h={16} key="close"><path d="M0 14h19V6" stroke={navy} strokeWidth="3" /><path d="M13 7l6-6 6 6z" fill={navy} /></Ldr>,
];

export default function App() {
  return (
    <Screen>
      <GlobalStyle />
      <TopEdge />
      <Workspace>
        <SideRail>
          <RailHead />
          <RailLabel>PLC programming</RailLabel>
          <Spacer />
        </SideRail>
        <TreePanel>
          <PanelHead $dark>
            <HeadTitle $left={10}>Project tree</HeadTitle>
            <HeadIcons $gap={15} $right={12}>
              <Pillars />
              <svg width="9" height="17" viewBox="0 0 9 17"><polygon points="9,0 0,8.500 9,17" fill="#fff" /></svg>
            </HeadIcons>
          </PanelHead>
          <TabStrip>
            <TreeTab $w={127} $pl={18} $active>Devices</TreeTab>
            <TreeTab $w={175} $pl={18}>Plant objects</TreeTab>
          </TabStrip>
          <TreeTools>
            <svg width="24" height="24" viewBox="0 0 24 24">
              <rect y="4" width="23" height="20" fill="#d6d6d6" stroke="#b0b0b0" />
              <path d="M4 9h4M6 9v10h3M6 14h3M10 13h6M10 19h6" stroke="#666" strokeWidth="1.600" />
              <Star x={17} y={6} r={6} color="#a0a0a0" />
            </svg>
            <ToolSep $ml={223} />
            <SelectedTool $ml={6}><TreeListIcon w={24} /></SelectedTool>
            <TreeToolIcon>
              <svg width="24" height="25" viewBox="0 0 24 25">
                <rect x="1" y="5" width="21" height="20" fill="#eef0f8" stroke="#7a86b0" />
                <rect x="1" y="5" width="21" height="4" fill="#2a4a90" />
                <g fill="#e07a10"><rect x="4" y="12" width="4" height="3" /><rect x="10" y="12" width="4" height="3" /><rect x="16" y="12" width="4" height="3" /></g>
                <g fill="#333"><rect x="4" y="18" width="4" height="3" /><rect x="10" y="18" width="4" height="3" /><rect x="16" y="18" width="4" height="3" /></g>
                <path d="M7 3h8v-2l8 6-8 6v-3H11z" fill="#1e9a3a" />
              </svg>
            </TreeToolIcon>
          </TreeTools>
          <GreyBand />
          <TreeBody>
            <TreeList>
              {treeFolders.map((f) => (
                <TreeRow key={f.name}>
                  <TreeArrowSlot><Tri dir={f.open ? "d" : "r"} size={11} /></TreeArrowSlot>
                  <TreeFolderSlot><FolderIcon glyph="tree" /></TreeFolderSlot>
                  <span>{f.name}</span>
                </TreeRow>
              ))}
              <TreeRow $selected>
                <TreeBlockSlot><BlockIcon green /></TreeBlockSlot>
                <span>Auto_Mode_...</span>
              </TreeRow>
              {treeBlocks.map((b) => (
                <TreeRow key={b}>
                  <TreeBlockSlot><BlockIcon /></TreeBlockSlot>
                  <span>{b}</span>
                </TreeRow>
              ))}
              {treeDbs.map((d, i) => (
                <TreeRow key={i}>
                  <TreeBlockSlot $pl={3}><DbIcon /></TreeBlockSlot>
                  <span>{d}</span>
                </TreeRow>
              ))}
            </TreeList>
            <VScroll>
              <ScrollBtn $w={26} $h={25}><Chev dir="u" /></ScrollBtn>
              <VThumb $top={158} $h={148}><GripH /></VThumb>
              <Spacer />
              <ScrollBtn $w={26} $h={25}><Chev dir="d" /></ScrollBtn>
            </VScroll>
          </TreeBody>
          <HScroll>
            <ScrollBtn $w={26} $h={25}><Chev dir="l" /></ScrollBtn>
            <HThumb $ml={1} $w={231}><GripV /></HThumb>
            <ScrollBtn $w={26} $h={25} $ml={31}><Chev dir="r" /></ScrollBtn>
          </HScroll>
          <DarkRule />
          <Accordion $h={31}>
            <AccordionChevron><Chev dir="r" size={18} color="#111" /></AccordionChevron>
            Details view
          </Accordion>
        </TreePanel>
        <Line />
        <EditorPanel>
          <PanelHead>
            <Crumbs>
              <Crumb>..024_R4_CCD</Crumb><CrumbArrow />
              <Crumb $ls={-0.14}>PLC_1 [CPU 1214C DC/DC/DC]</Crumb><CrumbArrow />
              <Crumb>Program blocks</Crumb><CrumbArrow />
              <Crumb $ls={-0.35}>MOTOR_SORTING</Crumb><CrumbArrow />
              <Crumb $ls={0.3}>Auto_Mode_New [FC13]</Crumb>
            </Crumbs>
            <HeadIcons $gap={11} $right={9}>
              <svg width="16" height="17" viewBox="0 0 16 17"><rect y="14" width="16" height="3" fill="#fff" /></svg>
              <RestoreIcon />
              <svg width="17" height="17" viewBox="0 0 17 17"><rect width="17" height="3" fill="#fff" /><rect y="5" width="17" height="12" fill="#f2f2f2" /></svg>
              <svg width="16" height="16" viewBox="0 0 16 16"><path d="M1 1l14 14M15 1L1 15" stroke="#fff" strokeWidth="3" /></svg>
            </HeadIcons>
          </PanelHead>
          <BrandBar>InstrumentationTools.com</BrandBar>
          <ToolBar>{renderTools(editorTools, 381)}</ToolBar>
          <BlockTitle>Auto_Mode_New</BlockTitle>
          <DeclTable>
            <DeclGrid $head>
              <HeadCell />
              <HeadCell />
              <HeadCell>Name</HeadCell>
              <HeadCell>Data type</HeadCell>
              <HeadCell>Default value</HeadCell>
              <HeadCell>Comment</HeadCell>
              <HeadCell />
            </DeclGrid>
            {Array.from({ length: 11 }).map((_, i) => (
              <DeclGrid key={i}>
                <DeclCell $num $pad={6}>{sections[i] ? i + 1 : ""}</DeclCell>
                <DeclCell $pad={2}>{sections[i] && <TagIcon />}</DeclCell>
                <DeclCell $pad={10}>
                  {sections[i] && <Tri dir="r" size={9} />}
                  {sections[i] && <NameText>{sections[i]}</NameText>}
                </DeclCell>
                <DeclCell>
                  {i === 1 && (
                    <MiniList>
                      <svg width="11" height="17" viewBox="0 0 11 17"><path d="M0 2h2M4 2h7M0 6h2M4 6h7M0 10h2M4 10h7M0 14h2M4 14h7" stroke="#1a1a3a" strokeWidth="1.500" /></svg>
                    </MiniList>
                  )}
                </DeclCell>
                <DeclCell />
                <DeclCell />
                <DeclCell />
              </DeclGrid>
            ))}
          </DeclTable>
          <Splitter>
            <SplitBtn><Tri dir="u" size={8} /></SplitBtn>
            <SplitBtn><Tri dir="d" size={8} /></SplitBtn>
          </Splitter>
          <Palette>
            {paletteIcons.map((ic, i) => (
              <PaletteBtn key={i}>{ic}</PaletteBtn>
            ))}
          </Palette>
          <CanvasRow>
            <Canvas>
              <NetHead $pad={11}>
                <Tri dir="d" size={15} />
                <b>Block title:</b>
                <TitleDots>.....</TitleDots>
              </NetHead>
              <CommentWrap $pt={0} $h={43}>
                <CommentBox $ml={21} $h={30} $w={1196}>Comment</CommentBox>
              </CommentWrap>
              <NetHead $pad={35}>
                <Tri dir="d" size={15} />
                <b>Network 1:</b>
                <NetTitle $ml={14}>Pump Sorting Logic</NetTitle>
              </NetHead>
              <CommentWrap $pt={5} $h={35}>
                <CommentBox $ml={41} $h={30} $w={827}>Comment</CommentBox>
              </CommentWrap>
              <NetRule />
              <Rung>
                <RungBar />
                <FbColumn>
                  <Address>%DB86</Address>
                  <div>"Pump_Sorting_</div>
                  <div>DB"</div>
                  <FbBox>
                    <Address>%FB9</Address>
                    <div>"Motor_Sorting"</div>
                  </FbBox>
                </FbColumn>
              </Rung>
            </Canvas>
            <CanvasScroll>
              <ScrollBtn $w={25} $h={25}><Chev dir="u" /></ScrollBtn>
              <VThumb $top={1} $h={20} $w={25}><GripH /></VThumb>
              <Spacer />
              <ScrollBtn $w={25} $h={25}><Chev dir="d" /></ScrollBtn>
            </CanvasScroll>
          </CanvasRow>
          <StatusRow>
            <Combo>
              <ComboText>100%</ComboText>
              <ComboBtn><Tri dir="d" size={11} color="#111" /></ComboBtn>
            </Combo>
            <ZoomSlider>
              <svg width="106" height="27" viewBox="0 0 106 27">
                <path d="M0 12h106" stroke="#777" strokeWidth="1.500" />
                <path d="M2 20v6M9 20v6M16 20v6M23 20v6M30 20v6M37 20v6M44 20v6M51 20v6M58 20v6M65 20v6M72 20v6M79 20v6M86 20v6M93 20v6M100 20v6" stroke="#777" />
                <path d="M31 6h14v13l-7 6-7-6z" fill="#c4c4c4" stroke="#8a8a8a" />
              </svg>
            </ZoomSlider>
            <StatusEnd />
          </StatusRow>
          <DarkRule />
          <InspectorBar>
            <InspectorTab $w={169} $ml={0} $gap={9}>
              <svg width="22" height="28" viewBox="0 0 22 28">
                <rect x="1" y="1" width="16" height="24" fill="#eef1fb" stroke="#b8c0dc" />
                <rect x="1" y="25" width="16" height="2" fill="#6a72c8" />
                <circle cx="9" cy="12" r="5" fill="none" stroke="#14144a" strokeWidth="2" />
                <path d="M13 16l6 7" stroke="#14144a" strokeWidth="2.400" />
              </svg>
              Properties
            </InspectorTab>
            <InspectorTab $w={114} $ml={2} $gap={7} $active>
              <svg width="24" height="30" viewBox="0 0 24 30">
                <rect x="4" y="4" width="14" height="24" fill="#eef1fb" stroke="#b8c0dc" />
                <path d="M0 3h6M4 0l3 3-3 3M12 23h9M18 20l4 3-4 3" stroke="#14144a" strokeWidth="1.800" />
                <path d="M9 10h2v9M8 19h6" stroke="#14144a" strokeWidth="2" />
                <circle cx="10" cy="7" r="1.300" fill="#14144a" />
              </svg>
              Info
              <svg width="20" height="24" viewBox="0 0 20 24"><ellipse cx="10" cy="12" rx="9" ry="11" fill="#f7d81e" stroke="#c8a400" /><path d="M10 10v7M8 18h5M8 10h2" stroke="#333" strokeWidth="2" /><circle cx="10" cy="6.500" r="1.400" fill="#333" /></svg>
            </InspectorTab>
            <InspectorTab $w={184} $ml={2} $gap={15}>
              <svg width="18" height="28" viewBox="0 0 18 28">
                <rect x="0.500" y="0.500" width="17" height="25" fill="#eef1fb" stroke="#b8c0dc" />
                <rect x="0" y="25" width="18" height="2" fill="#6a72c8" />
                <path d="M4 3v8c0 3 4 3 4 0V3M6 15v5c0 3 5 3 5 0v-2" fill="none" stroke="#14144a" strokeWidth="1.300" />
                <circle cx="12" cy="16" r="2" fill="none" stroke="#14144a" />
              </svg>
              Diagnostics
            </InspectorTab>
            <InspectorIcons>
              <RestoreIcon color="#efefef" />
              <svg width="18" height="19" viewBox="0 0 18 19"><rect width="18" height="4" fill="#d8d8d8" /><rect y="5" width="18" height="4" fill="#d8d8d8" /><rect y="10" width="18" height="4" fill="#d8d8d8" /><rect y="15" width="18" height="4" fill="#d8d8d8" /></svg>
              <svg width="18" height="13" viewBox="0 0 18 13"><polygon points="0,13 9,0 18,13" fill="#fff" /></svg>
            </InspectorIcons>
          </InspectorBar>
        </EditorPanel>
        <Line $w={3} />
        <InstrPanel>
          <PanelHead>
            <HeadTitle $left={9}>Instructions</HeadTitle>
            <HeadIcons $gap={11} $right={12}>
              <RestoreIcon />
              <Pillars color="#d8d8d8" />
              <svg width="9" height="17" viewBox="0 0 9 17"><polygon points="0,0 9,8.500 0,17" fill="#f2f2f2" /></svg>
            </HeadIcons>
          </PanelHead>
          <OptionsGap>
            <OptionsBar>Options</OptionsBar>
          </OptionsGap>
          <OptionsTools>
            <Tool $ml={43} $top={9}><Tri dir="r" size={9} /></Tool>
            <Tool $ml={14} $top={9}>
              <svg width="22" height="22" viewBox="0 0 22 22"><rect x=".5" y=".5" width="21" height="21" fill="#f2f4fa" stroke="#a8b2d0" /><rect y="19" width="22" height="3" fill="#9aa4dc" /></svg>
            </Tool>
            <Tool $ml={18} $top={9}>
              <svg width="15" height="14" viewBox="0 0 15 14"><rect x=".5" y=".5" width="14" height="13" fill="#e8ecf8" stroke="#8a94c8" /><path d="M3 4h9M3 7h9M3 10h9" stroke="#4a5080" strokeDasharray="2.500 .5" /></svg>
            </Tool>
          </OptionsTools>
          <Accordion $h={32} $mt={1}>
            <AccordionChevron><Chev dir="r" size={18} color="#111" /></AccordionChevron>
            Favorites
          </Accordion>
          <Accordion $h={32} $mt={2}>
            <AccordionChevron><Chev dir="d" size={18} color="#111" /></AccordionChevron>
            Basic instructions
          </Accordion>
          <InstrHeader>Name</InstrHeader>
          <InstrList>
            {instructions.map((r, i) => (
              <InstrRow key={i}>
                {r.glyph !== "none" && <Tri dir="r" size={11} />}
                {r.glyph !== "none" && <InstrIconSlot><FolderIcon glyph={r.glyph} /></InstrIconSlot>}
                {r.name}
              </InstrRow>
            ))}
          </InstrList>
          <HScroll>
            <ScrollBtn $w={26} $h={26}><Chev dir="l" /></ScrollBtn>
            <HThumb $ml={2} $w={116}><GripV /></HThumb>
            <ScrollBtn $w={26} $h={26} $ml={88}><Chev dir="r" /></ScrollBtn>
          </HScroll>
          <Accordion $h={33} $mt={3}>
            <AccordionChevron><Chev dir="r" size={18} color="#111" /></AccordionChevron>
            Extended instructions
          </Accordion>
          <Accordion $h={33} $mt={2}>
            <AccordionChevron><Chev dir="r" size={18} color="#111" /></AccordionChevron>
            Technology
          </Accordion>
          <Accordion $h={33} $mt={2}>
            <AccordionChevron><Chev dir="r" size={18} color="#111" /></AccordionChevron>
            Communication
          </Accordion>
          <Accordion $h={33} $mt={2}>
            <AccordionChevron><Chev dir="r" size={18} color="#111" /></AccordionChevron>
            Optional packages
          </Accordion>
        </InstrPanel>
        <RightRail>
          <RailTab $h={184} $active>
            <svg width="20" height="20" viewBox="0 0 20 20">
              <g fill="#f0f2f8" stroke="#6a7098"><rect x=".5" y=".5" width="8.500" height="8.500" /><rect x="11" y=".5" width="8.500" height="8.500" /><rect x=".5" y="11" width="8.500" height="8.500" /><rect x="11" y="11" width="8.500" height="8.500" /></g>
              <path d="M2.500 5h4M13 3.500h4M13 6h4M4.500 13v1M2.500 16h4M13 15h4" stroke="#222" strokeWidth="1.300" />
            </svg>
            <RailTabText $active>Instructions</RailTabText>
          </RailTab>
          <RailTab $h={139}>
            <svg width="17" height="24" viewBox="0 0 17 24">
              <rect x=".5" y=".5" width="16" height="21" fill="#f4f6fc" stroke="#b8c0dc" />
              <rect y="21" width="17" height="2" fill="#6a72c8" />
              <path d="M3 3v7c0 3 4 3 4 0V3M5 13v3c0 3 6 3 6 0v-2" fill="none" stroke="#14144a" strokeWidth="1.300" />
              <circle cx="12" cy="12" r="2" fill="none" stroke="#14144a" />
            </svg>
            <RailTabText>Testing</RailTabText>
          </RailTab>
          <RailTab $h={122}>
            <svg width="24" height="24" viewBox="0 0 24 24">
              <rect x="1" y="3" width="15" height="18" fill="#fff" stroke="#c8a860" />
              <rect x="5" y="1" width="7" height="4" fill="#777" />
              <path d="M3 8h2M6 8h8M3 11h2M6 11h8M3 14h2M6 14h8" stroke="#14144a" strokeWidth="1.300" />
              <path d="M10 16l4 5 8-8" fill="none" stroke="#22a030" strokeWidth="2.600" />
            </svg>
            <RailTabText>Tasks</RailTabText>
          </RailTab>
          <RailTab $h={134} $pt={7} $gap={14}>
            <svg width="22" height="20" viewBox="0 0 22 20">
              <path d="M1 1h9l1 1 1-1h9v16H12l-1 1-1-1H1z" fill="#f2f4fc" stroke="#3a4aa8" strokeWidth="1.600" />
              <path d="M11 2v16" stroke="#3a4aa8" strokeWidth="1.500" />
            </svg>
            <RailTabText>Libraries</RailTabText>
          </RailTab>
        </RightRail>
      </Workspace>
      <TaskBar>
        <PortalArrow />
        <PortalText>Portal view</PortalText>
        <EditorTask><OverviewIcon />Overview</EditorTask>
        <EditorTask><BlockIcon />Motor_Avail_...</EditorTask>
        <EditorTask $active><BlockIcon green />Auto_Mode_...</EditorTask>
        <TaskTool>
          <svg width="24" height="28" viewBox="0 0 24 28">
            <path d="M2 3h10M2 7h10M2 11h10M2 15h10" stroke="#fff" strokeWidth="2.500" />
            <path d="M19 16V4M16 7l3-4 3 4" stroke="#14144a" strokeWidth="1.600" fill="none" />
            <rect x="1" y="19" width="22" height="8" fill="#14144a" />
            <g fill="#fff"><rect x="3" y="21" width="5" height="4" /><rect x="9.500" y="21" width="5" height="4" /><rect x="16" y="21" width="5" height="4" /></g>
          </svg>
        </TaskTool>
        <TaskStatus>
          <svg width="23" height="24" viewBox="0 0 23 24"><ellipse cx="11.500" cy="12" rx="11.500" ry="12" fill="#1414e0" /><path d="M5 12l4 6 8-12" fill="none" stroke="#fff" strokeWidth="3" /></svg>
          Project Kabbare_Oct_2024_R4_CCD op...
        </TaskStatus>
      </TaskBar>
    </Screen>
  );
}
